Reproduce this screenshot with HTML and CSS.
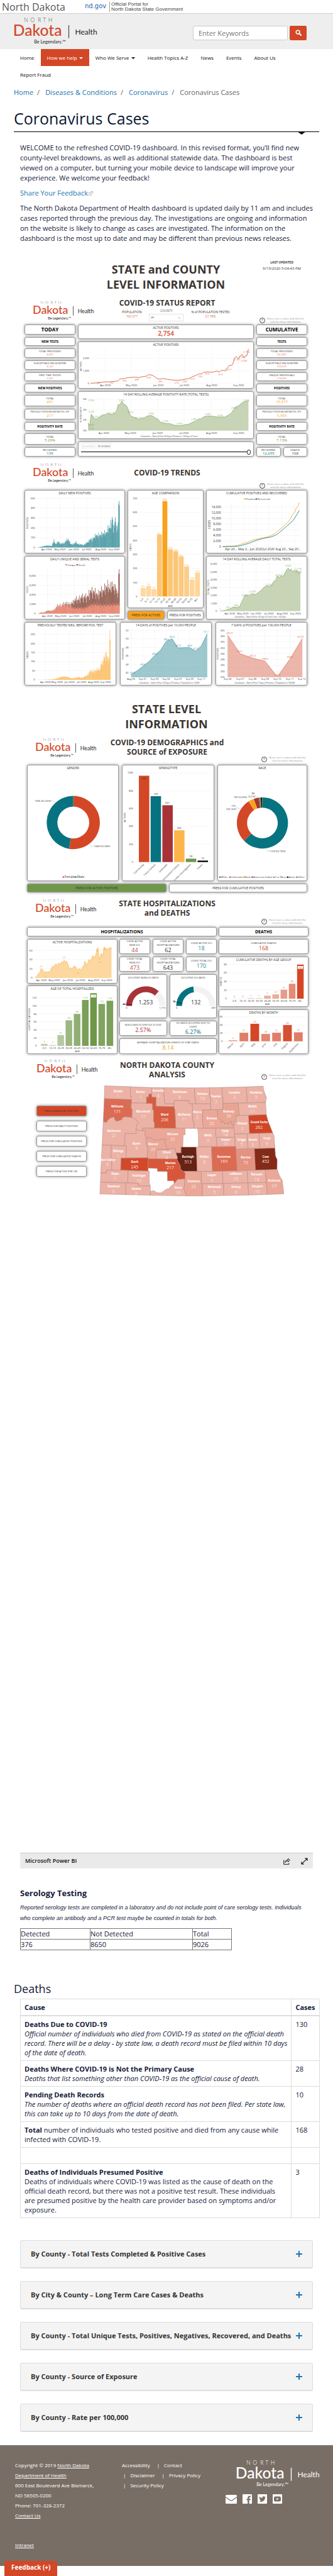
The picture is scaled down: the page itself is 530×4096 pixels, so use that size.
FILE: index.html
```
<!DOCTYPE html>
<html lang="en">
<head>
<meta charset="utf-8">
<title>Coronavirus Cases | Department of Health</title>
<link rel="stylesheet" href="styles.css">
</head>
<body>
<div class="portal">
  <span class="portal-name">North Dakota</span>
  <span class="portal-gov">nd.gov</span>
  <span class="portal-tag">Official Portal for<br>North Dakota State Government</span>
</div>

<header class="site-head">
  <a class="brand" href="#" aria-label="North Dakota Health"><svg class="logo logo-lg"></svg></a>
  <form class="search">
    <input type="text" aria-label="Search" placeholder="Enter Keywords">
    <button type="button" aria-label="Search"><svg viewBox="0 0 16 16"><circle cx="6.5" cy="6.5" r="4.6" fill="none" stroke="#fff" stroke-width="2.6"/><path d="M10 10l4.4 4.4" stroke="#fff" stroke-width="3" stroke-linecap="round"/></svg></button>
  </form>
</header>

<nav class="menu">
  <a href="#">Home</a>
  <a href="#" class="on">How we help <i class="caret"></i></a>
  <a href="#">Who We Serve <i class="caret"></i></a>
  <a href="#">Health Topics A-Z</a>
  <a href="#">News</a>
  <a href="#">Events</a>
  <a href="#">About Us</a>
  <a href="#">Report Fraud</a>
</nav>

<main>
  <div class="crumbs"><a href="#">Home</a><span>/</span><a href="#">Diseases &amp; Conditions</a><span>/</span><a href="#">Coronavirus</a><span>/</span>Coronavirus Cases</div>
  <h1>Coronavirus Cases</h1>

  <div class="body">
    <p>WELCOME to the refreshed COVID-19 dashboard. In this revised format, you’ll find new<br>county-level breakdowns, as well as additional statewide data. The dashboard is best<br>viewed on a computer, but turning your mobile device to landscape will improve your<br>experience. We welcome your feedback!</p>
    <p><a href="#">Share Your Feedback<svg class="ext" viewBox="0 0 10 10"><path d="M5 .5h4.500v4.500l-1.500-1.500-3 3-1.500-1.500 3-3zM4 3.500H.5v6H6V7" fill="none" stroke="#999" stroke-width="1"/></svg></a></p>
    <p>The North Dakota Department of Health dashboard is updated daily by 11 am and includes<br>cases reported through the previous day. The investigations are ongoing and information<br>on the website is likely to change as cases are investigated. The information on the<br>dashboard is the most up to date and may be different than previous news releases.</p>

    <section class="report">
      <div class="title-row">
        <h2>STATE and COUNTY<br>LEVEL INFORMATION</h2>
        <div class="updated"><b>LAST UPDATED</b><span>9/13/2020 5:04:43 PM</span></div>
      </div>

      <div class="head head-status">
        <svg class="logo logo-sm"></svg>
        <div class="head-mid">
          <h2 class="sub">COVID-19 STATUS REPORT</h2>
          <div class="facts">
            <div class="fact"><span>POPULATION</span><em>760,077</em></div>
            <div class="pick"><label for="county">COUNTY</label><select id="county"><option>All</option></select></div>
            <div class="fact"><span>% of POPULATION TESTED</span><em>27.78%</em></div>
          </div>
        </div>
        <div class="note"><b class="help">?</b><span>Hover over a value and click the<br>icon for more information</span></div>
      </div>

      <div class="status">
        <div class="side">
          <div class="card big">TODAY</div>
          <div class="card mid">NEW TESTS</div>
          <div class="card red"><span>TOTAL PROCESSED</span><em class="s">8,505</em></div>
          <div class="card red"><span>SUSCEPTIBLE ENCOUNTERS</span><em class="s">8,147</em></div>
          <div class="card red"><span>FIRST TIME TESTED</span><em class="s">2,292</em></div>
          <div class="card mid">NEW POSITIVES</div>
          <div class="card gold"><span>TOTAL</span><em>431</em></div>
          <div class="card gold"><span class="xs">PREVIOUSLY TESTED NEG BEFORE POS. TEST</span><em>217</em></div>
          <div class="card mid">POSITIVITY RATE</div>
          <div class="card green"><span>TOTAL</span><em>5.29%</em></div>
          <div class="card teal"><span>RECOVERED</span><em>135</em></div>
        </div>
        <div class="center">
          <div class="card active"><span>ACTIVE POSITIVES</span><strong>2,754</strong></div>
          <div class="card plot"><h3>ACTIVE POSITIVES</h3><svg id="c-active"></svg></div>
          <div class="card plot"><h3>14 DAY ROLLING AVERAGE POSITIVITY RATE (TOTAL TESTS)</h3><svg id="c-rate"></svg></div>
          <div class="card range">
            <div class="dates"><input class="off" type="text" value="3/15/2020" aria-label="From"><input type="text" value="9/12/2020" aria-label="To"></div>
            <input class="slider" type="range" min="0" max="100" value="100" aria-label="Date range">
          </div>
        </div>
        <div class="side">
          <div class="card big">CUMULATIVE</div>
          <div class="card mid">TESTS</div>
          <div class="card red"><span>TOTAL PROCESSED</span><em class="s">541,850</em></div>
          <div class="card red"><span>SUSCEPTIBLE ENCOUNTERS</span><em class="s">523,570</em></div>
          <div class="card red"><span>UNIQUE INDIVIDUALS</span><em class="s">218,606</em></div>
          <div class="card mid">POSITIVES</div>
          <div class="card gold"><span>TOTAL</span><em>15,577</em></div>
          <div class="card gold"><span class="xs">PREVIOUSLY TESTED NEG BEFORE POS. TEST</span><em>5,383</em></div>
          <div class="card mid">POSITIVITY RATE</div>
          <div class="card green"><span>TOTAL</span><em>7.13%</em></div>
          <div class="pair">
            <div class="card teal"><span>RECOVERED</span><em>12,655</em></div>
            <div class="card"><span>DEATHS</span><em>168</em></div>
          </div>
        </div>
      </div>

      <div class="head head-trends">
        <svg class="logo logo-sm"></svg>
        <div class="head-mid"><h2 class="sub">COVID-19 TRENDS</h2></div>
        <div class="note"><b class="help">?</b><span>Hover over a value and click the<br>icon for more information</span></div>
      </div>

      <div class="trends">
        <div class="col">
          <div class="card plot"><h3>DAILY NEW POSITIVES</h3><svg id="c-new"></svg></div>
          <div class="card plot"><h3>DAILY UNIQUE AND SERIAL TESTS</h3><svg id="c-tests"></svg></div>
        </div>
        <div class="col">
          <div class="card plot"><h3>AGE COMPARISON</h3><svg id="c-age"></svg></div>
          <div class="toggle">
            <button class="card press press-gold" type="button">PRESS FOR ACTIVES</button>
            <button class="card press" type="button">PRESS FOR POSITIVES</button>
          </div>
        </div>
        <div class="col">
          <div class="card plot"><h3>CUMULATIVE POSITIVES AND RECOVERED</h3><svg id="c-cumul"></svg></div>
          <div class="card plot"><h3>14 DAY ROLLING AVERAGE DAILY TOTAL TESTS</h3><svg id="c-roll"></svg></div>
        </div>
      </div>
      <div class="thirds">
        <div class="card plot"><h3>PREVIOUSLY TESTED NEG. BEFORE POS. TEST</h3><svg id="c-prev"></svg></div>
        <div class="card plot"><h3>14 DAYS of POSITIVES per 10,000 PEOPLE</h3><svg id="c-14"></svg></div>
        <div class="card plot"><h3>7 DAYS of POSITIVES per 100,000 PEOPLE</h3><svg id="c-7"></svg></div>
      </div>

      <h2 class="state">STATE LEVEL<br>INFORMATION</h2>

      <div class="head head-demo">
        <svg class="logo logo-sm"></svg>
        <div class="head-mid"><h2 class="sub">COVID-19 DEMOGRAPHICS and<br>SOURCE of EXPOSURE</h2></div>
        <div class="note"><b class="help">?</b><span>Hover over a value and click the<br>icon for more information</span></div>
      </div>
      <div class="demo">
        <div class="card plot"><h3>GENDER</h3><svg id="c-gender"></svg></div>
        <div class="card plot"><h3>SPREADTYPE</h3><svg id="c-spread"></svg></div>
        <div class="card plot"><h3>RACE</h3><svg id="c-race"></svg></div>
      </div>
      <div class="demo-toggle">
        <button class="card press press-green" type="button">PRESS FOR ACTIVE POSITIVES</button>
        <button class="card press" type="button">PRESS FOR CUMULATIVE POSITIVES</button>
      </div>

      <div class="head head-hosp">
        <svg class="logo logo-sm"></svg>
        <div class="head-mid"><h2 class="sub">STATE HOSPITALIZATIONS<br>and DEATHS</h2></div>
        <div class="note"><b class="help">?</b><span>Hover over a value and click the<br>icon for more information</span></div>
      </div>
      <div class="hosp">
        <div class="card band wide">HOSPITALIZATIONS</div>
        <div class="card band">DEATHS</div>
        <div class="col3">
          <div class="card plot"><h3>ACTIVE HOSPITALIZATIONS</h3><svg id="c-hosp"></svg></div>
          <div class="card plot"><h3>AGE OF TOTAL HOSPITALIZED</h3><svg id="c-hage"></svg></div>
        </div>
        <div class="col">
          <div class="trio">
            <div class="card kpi rose"><span>COVID ACTIVE<br>NON-ICU</span><em>44</em></div>
            <div class="card kpi"><span>COVID ACTIVE<br>HOSPITALIZATIONS</span><em>62</em></div>
            <div class="card kpi aqua"><span>COVID ACTIVE ICU</span><em>18</em></div>
            <div class="card kpi rose"><span>COVID TOTAL<br>NON-ICU</span><em>473</em></div>
            <div class="card kpi"><span>COVID TOTAL<br>HOSPITALIZATIONS</span><em>643</em></div>
            <div class="card kpi aqua"><span>COVID TOTAL ICU</span><em>170</em></div>
          </div>
          <div class="duo">
            <div class="card plot"><h3 class="s">OCCUPIED NON-ICU BEDS</h3><svg id="c-beds"></svg></div>
            <div class="card plot"><h3 class="s">OCCUPIED ICU BEDS</h3><svg id="c-icu"></svg></div>
            <div class="card kpi wine"><span class="xs">NON-ICU BEDS OCCUPIED DUE TO COVID</span><em>2.57%</em></div>
            <div class="card kpi teal"><span>ICU BEDS OCCUPIED DUE TO<br>COVID</span><em>6.27%</em></div>
          </div>
          <div class="card kpi gold last"><span>AVERAGE HOSPITALIZATION LENGTH OF STAY (DAYS)</span><em>8.14</em></div>
        </div>
        <div class="col">
          <div class="card kpi orange"><span>CUMULATIVE DEATHS</span><em>168</em></div>
          <div class="card plot"><h3>CUMULATIVE DEATHS BY AGE GROUP</h3><svg id="c-dage"></svg></div>
          <div class="card plot"><h3>DEATHS BY MONTH</h3><svg id="c-month"></svg></div>
        </div>
      </div>

      <div class="head head-map">
        <svg class="logo logo-sm"></svg>
        <div class="head-mid"><h2 class="sub">NORTH DAKOTA COUNTY<br>ANALYSIS</h2></div>
        <div class="note"><b class="help">?</b><span>Hover over a value and click the<br>icon for more information</span></div>
      </div>
      <div class="county">
        <div class="presses">
          <button class="card press press-red" type="button">PRESS FOR ACTIVE POSITIVES</button>
          <button class="card press" type="button">PRESS FOR DAILY POSITIVES</button>
          <button class="card press" type="button">PRESS FOR CUMULATIVE POSITIVES</button>
          <button class="card press" type="button">PRESS FOR CUMULATIVE DEATHS</button>
          <button class="card press" type="button">PRESS FOR ACTIVE PER 10K</button>
        </div>
        <svg id="map" viewBox="0 0 1350 840"></svg>
      </div>
    </section>

    <div class="powerbar">
      <span>Microsoft Power BI</span>
      <button type="button" aria-label="Share"><svg viewBox="0 0 16 16"><path d="M1 5v10h12v-3M4 11c0-4 3-6.500 7-6.500V1.500l4 4-4 4V7C8 7 6 8 4 11z" fill="none" stroke="#000" stroke-width="1.300"/></svg></button>
      <button type="button" aria-label="Full screen"><svg viewBox="0 0 16 16"><path d="M1.500 14.500l13-13M9 1.500h5.500V7M1.500 9v5.500H7" fill="none" stroke="#000" stroke-width="1.500"/></svg></button>
    </div>

    <h3 class="sero-title">Serology Testing</h3>
    <p class="sero-note">Reported serology tests are completed in a laboratory and do not include point of care serology tests. Individuals who complete an antibody and a PCR test maybe be counted in totals for both.</p>
    <table class="sero">
      <colgroup><col class="c1"><col class="c2"><col></colgroup>
      <tr><td>Detected</td><td>Not Detected</td><td>Total</td></tr>
      <tr><td>376</td><td>8650</td><td>9026</td></tr>
    </table>
  </div>

  <h2 class="deaths-title">Deaths</h2>
  <div class="body">
    <table class="deaths">
      <thead><tr><th>Cause</th><th class="n">Cases</th></tr></thead>
      <tbody>
      <tr><td><b>Deaths Due to COVID-19</b><br><i>Official number of individuals who died from COVID-19 as stated on the official death<br>record. There will be a delay - by state law, a death record must be filed within 10 days<br>of the date of death.</i></td><td>130</td></tr>
      <tr><td><b>Deaths Where COVID-19 is Not the Primary Cause</b><br><i>Deaths that list something other than COVID-19 as the official cause of death.</i></td><td>28</td></tr>
      <tr><td><b>Pending Death Records</b><br><i>The number of deaths where an official death record has not been filed. Per state law,<br>this can take up to 10 days from the date of death.</i></td><td>10</td></tr>
      <tr><td><b>Total</b> number of individuals who tested positive and died from any cause while<br>infected with COVID-19.</td><td>168</td></tr>
      <tr><td>&nbsp;</td><td></td></tr>
      <tr><td><b>Deaths of Individuals Presumed Positive</b><br>Deaths of individuals where COVID-19 was listed as the cause of death on the<br>official death record, but there was not a positive test result. These individuals<br>are presumed positive by the health care provider based on symptoms and/or<br>exposure.</td><td>3</td></tr>
      </tbody>
    </table>

    <div class="panels">
      <button type="button"><span>By County - Total Tests Completed &amp; Positive Cases</span><i class="plus"></i></button>
      <button type="button"><span>By City &amp; County – Long Term Care Cases &amp; Deaths</span><i class="plus"></i></button>
      <button type="button"><span>By County - Total Unique Tests, Positives, Negatives, Recovered, and Deaths</span><i class="plus"></i></button>
      <button type="button"><span>By County - Source of Exposure</span><i class="plus"></i></button>
      <button type="button"><span>By County - Rate per 100,000</span><i class="plus"></i></button>
    </div>
  </div>
</main>

<footer>
  <div class="addr">
    <div>Copyright © 2019 <a href="#">North Dakota</a></div>
    <div><a href="#">Department of Health</a></div>
    <div>600 East Boulevard Ave Bismarck,</div>
    <div>ND 58505-0200</div>
    <div>Phone: 701-328-2372</div>
    <div><a href="#">Contact Us</a></div>
    <div class="intranet"><a href="#">Intranet</a></div>
  </div>
  <div class="links">
    <div><a href="#">Accessibility</a><span>|</span><a href="#">Contact</a></div>
    <div><span>|</span><a href="#">Disclaimer</a><span>|</span><a href="#">Privacy Policy</a></div>
    <div><span>|</span><a href="#">Security Policy</a></div>
  </div>
  <div class="social">
    <svg class="logo logo-lg logo-white"></svg>
    <div class="icons">
      <a href="#" aria-label="Email"><svg class="mail" viewBox="0 0 18 15"><rect y="1" width="18" height="14" rx="1.500" fill="#fff"/><path d="M0 4.500l7.500 5.200q1.500 1 3 0L18 4.500" fill="none" stroke="#796e65" stroke-width="1.200"/></svg></a>
      <a href="#" aria-label="Facebook"><svg viewBox="0 0 15 15"><rect width="15" height="15" rx="1" fill="#fff"/><path d="M8.200 15V9.500H6.500V7.200h1.700V5.600c0-2 1.200-3.100 3-3.100h1.700v2.200h-1.100c-.9 0-1.200.5-1.200 1.200v1.300h2.200l-.3 2.300h-1.900V15z" fill="#796e65"/></svg></a>
      <a href="#" aria-label="Twitter"><svg viewBox="0 0 15 15"><rect width="15" height="15" rx="1" fill="#fff"/><path d="M12.800 4.300c-.4.2-.8.300-1.200.35.450-.27.770-.7.930-1.200-.4.250-.87.430-1.350.520a2.130 2.130 0 0 0-3.650 1.950A6.070 6.070 0 0 1 3.100 3.700a2.130 2.130 0 0 0 .66 2.860c-.35 0-.68-.1-.97-.27 0 1.050.73 1.930 1.710 2.140-.3.080-.64.090-.96.030.27.850 1.050 1.460 2 1.480A4.300 4.300 0 0 1 2.400 10.900 6.060 6.060 0 0 0 11.730 5.500c.42-.3.790-.7 1.070-1.200z" fill="#796e65"/></svg></a>
      <a href="#" aria-label="YouTube"><svg viewBox="0 0 15 15"><rect width="15" height="15" rx="1" fill="#fff"/><rect x="2" y="3.500" width="11" height="8" rx="2.200" fill="#796e65"/><path d="M6.300 5.700v3.600l3-1.800z" fill="#fff"/></svg></a>
    </div>
  </div>
</footer>
<button class="feedback" type="button">Feedback (+)</button>
<script src="charts.js"></script>
</body>
</html>
```
FILE: styles.css
```
* { box-sizing: border-box; }
body { margin: 0; padding-bottom: 18px; background: #fff; color: #15203a; font: 11px/16px "Open Sans", "Noto Sans", sans-serif; }
a { color: #1b76b0; text-decoration: none; }
button, input, select { font-family: inherit; margin: 0; }
h1, h2, h3, p { margin: 0; font-weight: 400; }

.portal { display: flex; align-items: center; padding: 1px 0 0 3px; border-bottom: 1px solid #ccc; background: #fff; }
.portal-name { width: 132px; font-size: 16px; line-height: 20px; color: #58595b; }
.portal-gov { width: 39px; font: 10px/14px "DejaVu Sans", sans-serif; color: #2a62a8; padding-bottom: 3px; }
.portal-tag { padding-left: 2px; border-left: 1px solid #999; font: 8px/8px "Liberation Sans", sans-serif; color: #444; }

.site-head { display: flex; align-items: center; justify-content: space-between; padding: 6px 42px 6px 22px; background: #eee; }
.brand { display: flex; }
.logo { --main: #d34727; --ink: #222; --soft: #555; display: block; overflow: visible; font-family: Lato, "Open Sans", sans-serif; }
.logo-lg { width: 131px; height: 44px; }
.logo-sm { width: 95px; height: 32px; }
.logo-white { --main: #fff; --ink: #fff; --soft: #fff; }
.lg-thin { fill: var(--soft); font-weight: 300; }
.lg-main { fill: var(--main); font-weight: 500; }
.lg-text { fill: var(--ink); }
.lg-bar { fill: var(--soft); }
.search { display: flex; gap: 3px; padding-top: 4px; }
.search input { width: 151px; height: 23px; padding: 0 8px; border: 1px solid #ccc; border-radius: 3px; background: #fff; font-size: 11px; color: #555; }
.search input::placeholder { color: #777; opacity: 1; }
.search button { width: 27px; height: 23px; padding: 0; border: 0; border-radius: 2px; background: #d34727; display: flex; align-items: center; justify-content: center; }
.search svg { width: 10px; height: 10px; }

.menu { display: flex; flex-wrap: wrap; padding: 0 60px 0 22px; font-size: 8px; line-height: 27px; }
.menu a { padding: 0 10px; color: #111; }
.menu a.on { background: #d34727; color: #fff; }
.caret { display: inline-block; border: 3px solid transparent; border-top-color: currentColor; border-bottom: 0; margin-left: 1px; vertical-align: 1px; }

main { padding: 7px 22px 0; }
.crumbs { color: #666; }
.crumbs span { margin: 0 9px 0 6px; }
h1 { position: relative; margin-top: 18px; padding-bottom: 6px; border-bottom: 1px solid #000; font-size: 25px; line-height: 30px; color: #0c1a33; }
h1::after { content: ""; position: absolute; right: 21px; top: 100%; border: 7px solid transparent; border-top: 5px solid #000; border-bottom: 0; }
.body { padding: 0 10px; }
.body > p { margin-bottom: 8px; white-space: nowrap; }
h1 + .body { padding-top: 17px; }
.ext { width: 7px; height: 7px; margin-left: 1px; }

/* dashboard */
.report { padding: 17px 9px 1036px 7px; color: #333; }
.title-row { display: grid; grid-template-columns: 81px 1fr 81px; }
.title-row h2 { grid-column: 2; padding-top: 4px; }
.title-row h2, .state { text-align: center; font-size: 18px; line-height: 24px; font-weight: 700; color: #3b3531; }
.updated { text-align: center; font-size: 6px; line-height: 10px; }
.updated b { display: block; font-size: 5px; }
.head { display: grid; grid-template-columns: 110px 1fr 110px; }
.head .logo-sm { margin: 10px 0 0 18px; }
.head-mid { text-align: center; padding: 10px 0 0 4px; }
.sub { font-size: 12px; line-height: 15px; font-weight: 700; color: #3b3531; white-space: nowrap; }
.note { display: flex; gap: 3px; align-self: end; justify-content: flex-end; align-items: center; padding: 0 2px 4px 0; text-align: center; font-size: 4px; line-height: 5px; color: #888; }
.help { width: 9px; border: 1px solid #444; border-radius: 50%; font-size: 6px; line-height: 7px; font-weight: 400; color: #333; }
.head-status { min-height: 52px; }
.head-status .logo-sm, .head-trends .logo-sm { margin-left: 14px; }
.head-status .logo-sm { margin-top: 14px; }
.head-status .note, .head-trends .note { padding-right: 5px; padding-bottom: 2px; }
.head-trends { min-height: 53px; }
.head-trends .head-mid { padding-top: 18px; }
.head-demo { min-height: 53px; }
.head-hosp { min-height: 55px; }
.head-map { min-height: 45px; }
.head-map .logo-sm { margin: 8px 0 0 20px; }
.facts { display: flex; justify-content: center; gap: 12px; padding-left: 28px; font-size: 5px; line-height: 7px; white-space: nowrap; }
.fact { padding-top: 4px; }
.fact span, .fact em { display: block; }
.fact em { font-style: normal; color: #df6a52; }
.pick { width: 55px; color: #666; }
.pick label { display: block; line-height: 10px; }
.pick select { -webkit-appearance: none; appearance: none; display: block; width: 100%; height: 12px; padding: 0 2px; border: 1px solid #e4e4e4; border-radius: 0; background: linear-gradient(45deg, transparent 50%, #aaa 50%, #aaa 62%, transparent 62%) right 4px center / 3px 3px no-repeat, linear-gradient(-45deg, transparent 50%, #aaa 50%, #aaa 62%, transparent 62%) right 2px center / 3px 3px no-repeat, #fff; font-size: 4px; line-height: 8px; color: #555; }

.card { display: flex; flex-direction: column; align-items: center; justify-content: center; min-width: 0; overflow: hidden; border: 1px solid #999; border-radius: 3px; background: #fff; box-shadow: 0 0 4px rgba(0,0,0,.45); text-align: center; font-size: 4px; line-height: 5px; color: #333; white-space: nowrap; }
.card em { font-style: normal; font-size: 6px; line-height: 7px; }
.card em.s { font-size: 4px; line-height: 6px; }
.card .xs { font-size: 3px; }
.red em { color: #df6a52; }
.gold em { color: #f9a21c; }
.green em { color: #6f9749; }
.teal em { color: #077380; }
.big { font-size: 8px; line-height: 10px; font-weight: 700; color: #000; }
.mid { font-size: 5px; line-height: 7px; font-weight: 700; color: #000; }
.plot { justify-content: flex-start; align-items: stretch; }
.plot h3 { font-size: 5px; line-height: 9px; }
.plot h3.s { font-size: 4px; }
.plot svg { display: block; width: 100%; height: auto; }

.status { display: grid; grid-template-columns: 81fr 280fr 81fr; gap: 4px; }
.side { display: grid; grid-template-rows: 16fr 14fr 15fr 15fr 14fr 14fr 18fr 17fr 14fr 18fr 15fr; gap: 4px; }
.center { display: flex; flex-direction: column; gap: 4px; min-width: 0; }
.pair { display: grid; grid-template-columns: 1fr 1fr; gap: 4px; }
.active { min-height: 23px; font-size: 5px; }
.active strong { font-size: 10px; line-height: 13px; color: #df6a52; }
.active span { padding-top: 1px; }
.range { min-height: 24px; padding: 0 4px; align-items: stretch; }
.dates { display: flex; gap: 2px; }
.dates input { width: 23px; height: 8px; padding: 0 1px; border: 1px solid #eee; font-size: 4px; color: #333; background: #fff; }
.dates .off { color: #bbb; }
.slider { -webkit-appearance: none; appearance: none; width: 100%; height: 9px; margin-top: 1px; background: linear-gradient(#000, #000) center / 100% 1px no-repeat; }
.slider::-webkit-slider-thumb { -webkit-appearance: none; width: 6px; height: 8px; border: 1px solid #333; border-radius: 50%; background: #fff; }

.trends { display: grid; grid-template-columns: 160fr 121fr 161fr; gap: 4px; }
.col, .col3 { display: flex; flex-direction: column; gap: 4px; min-width: 0; }
.col3 { gap: 3px; }
.toggle { display: grid; grid-template-columns: 1fr 1fr; gap: 4px; }
.press { min-height: 14px; padding: 0; font-size: 5px; line-height: 7px; }
.press-gold { background: #f9a21c; }
.press-green { background: #6f9749; }
.press-red { background: #d34727; }
.thirds { display: grid; grid-template-columns: 1fr 1fr 1fr; gap: 6px; margin-top: 4px; }
.state { margin-top: 25px; padding-left: 2px; }
.demo, .demo-toggle { margin-left: 4px; display: grid; }
.demo { grid-template-columns: 146fr 147fr 143fr; gap: 5px; }
.demo-toggle { grid-template-columns: 222fr 220fr; gap: 4px; margin-top: 4px; }

.hosp { margin: 0 -2px 0 4px; display: grid; grid-template-columns: 144fr 155fr 143fr; column-gap: 3px; row-gap: 4px; }
.band { min-height: 15px; font-size: 7px; line-height: 9px; font-weight: 700; color: #000; }
.wide { grid-column: span 2; }
.trio { display: grid; grid-template-columns: 1fr 1fr 1fr; gap: 4px; }
.duo { display: grid; grid-template-columns: 1fr 1fr; gap: 4px; }
.kpi { min-height: 24px; line-height: 6px; }
.kpi em { font-size: 9px; line-height: 10px; }
.last { min-height: 25px; }
.rose em { color: #bd4f55; }
.aqua em { color: #2f8b98; }
.wine em { color: #a73338; }
.orange em { color: #d34727; }

.county { display: flex; gap: 14px; padding: 0 33px 0 19px; }
.presses { display: flex; flex-direction: column; gap: 7px; padding-top: 37px; width: 80px; }
.presses .press { min-height: 17px; font-size: 4px; }
#map { flex: 1; min-width: 0; display: block; }

.powerbar { display: flex; align-items: center; gap: 17px; padding: 4px 8px; border-top: 1px solid #c8c8c8; background: #eaeaea; color: #111; font-size: 9px; font-weight: 600; }
.powerbar span { flex: 1; }
.powerbar button { display: flex; padding: 0; border: 0; background: none; }
.powerbar svg { width: 11px; height: 11px; }

.sero-title { margin-top: 30px; font-size: 13px; line-height: 18px; font-weight: 700; }
.body > .sero-note { margin: 6px 0 7px; white-space: normal; font: italic 9px/17px "Liberation Sans", Arial, sans-serif; }
.sero { width: 337px; table-layout: fixed; border-collapse: collapse; border: 1px solid #222; line-height: 16px; }
.sero td { padding: 0; border: 1px solid #777; }
.sero .c1 { width: 111px; }
.sero .c2 { width: 163px; }

.deaths-title { margin: 49px 0 4px; font-size: 18px; line-height: 24px; }
.deaths { width: 100%; border-collapse: collapse; border: 1px solid #ddd; line-height: 15px; }
.deaths th, .deaths td { padding: 5px 6px; border: 1px solid #ddd; text-align: left; vertical-align: top; white-space: nowrap; }
.deaths th { border-bottom-width: 2px; font-weight: 700; }
.deaths .n { width: 42px; }

.panels { display: flex; flex-direction: column; gap: 20px; margin: 35px 0 21px; }
.panels button { display: flex; align-items: center; justify-content: space-between; padding: 14px 16px; border: 1px solid #ddd; border-bottom-width: 2px; border-radius: 3px; background: #f4f4f4; font-size: 11px; line-height: 14px; font-weight: 700; color: #333; text-align: left; white-space: nowrap; }
.plus { width: 10px; height: 10px; background: linear-gradient(#1b76b0, #1b76b0) center / 10px 2px no-repeat, linear-gradient(#1b76b0, #1b76b0) center / 2px 10px no-repeat; }

footer { display: grid; grid-template-columns: 170fr 165fr 148fr; padding: 24px 23px 25px 24px; background: #796e65; color: #fff; font-size: 8px; line-height: 16px; }
footer a { color: #fff; }
.addr a { text-decoration: underline; }
.intranet { margin-top: 31px; }
.links span { margin: 0 7px 0 11px; }
.links span:first-child { margin-left: 2px; }
.social .logo-white { margin-left: auto; }
.icons { display: flex; gap: 9px; margin-top: 10px; }
.icons a { display: flex; }
.icons svg { width: 15px; height: 15px; }
.icons .mail { width: 18px; }
.feedback { position: fixed; left: 7px; bottom: 0; height: 24px; padding: 0 11px 4px; border: 0; border-radius: 4px 4px 0 0; background: #d34727; color: #fff; font-size: 10px; line-height: 14px; font-weight: 700; }
```
FILE: charts.js
```
(function () {
  var NS = 'http://www.w3.org/2000/svg';
  var INK = '#333', GRID = '#d4d4d4';
  var RED = '#d34727', TEAL = '#077380', GREEN = '#6f9749', GOLD = '#f9a21c', WINE = '#a73338';

  function el(parent, tag, attrs, text) {
    var n = document.createElementNS(NS, tag);
    for (var k in attrs) n.setAttribute(k, attrs[k]);
    if (text != null) n.textContent = text;
    parent.appendChild(n);
    return n;
  }

  // Department logo, shared by the page header, the report headings and the footer.
  Array.prototype.forEach.call(document.querySelectorAll('.logo'), function (svg) {
    svg.setAttribute('viewBox', '0 0 194 66');
    el(svg, 'text', { 'class': 'lg-thin', x: '23 38 56 68 81', y: 10, 'font-size': 13 }, 'NORTH');
    el(svg, 'text', { 'class': 'lg-main', x: -3, y: 43, 'font-size': 37 }, 'Dakota');
    el(svg, 'rect', { 'class': 'lg-bar', x: 129, y: 18, width: 2, height: 31 });
    el(svg, 'text', { 'class': 'lg-text', x: 145, y: 41, 'font-size': 18 }, 'Health');
    el(svg, 'text', { 'class': 'lg-text', x: 47, y: 62, 'font-size': 11 }, 'Be Legendary.™');
  });

  // A chart maps drawing units to the svg's own pixels: ox, oy is the origin, sy the vertical scale.
  function Chart(id, ox, oy, w, h, sy) {
    this.svg = document.getElementById(id);
    this.svg.setAttribute('viewBox', '0 0 ' + w + ' ' + h);
    this.X = function (x) { return +((x - ox) * 0.338).toFixed(2); };
    this.Y = function (y) { return +((y - oy) * sy).toFixed(2); };
  }
  Chart.prototype.text = function (x, y, s, o) {
    o = o || {};
    var size = o.size || 4, px = this.X(x), py = this.Y(y);
    var a = { x: px, y: py, dy: '.35em', 'font-size': size, fill: o.fill || INK, 'text-anchor': o.anchor || 'middle' };
    if (o.rot) a.transform = 'rotate(' + o.rot + ' ' + px + ' ' + py + ')';
    if (o.bold) a['font-weight'] = 700;
    el(this.svg, 'text', a, s);
  };
  Chart.prototype.texts = function (list, o) {
    for (var i = 0; i < list.length; i++) this.text(list[i][0], list[i][1], list[i][2], o);
  };
  Chart.prototype.line = function (x1, y1, x2, y2, o) {
    o = o || {};
    el(this.svg, 'line', { x1: this.X(x1), y1: this.Y(y1), x2: this.X(x2), y2: this.Y(y2), stroke: o.stroke || GRID, 'stroke-width': o.w || 0.5, 'stroke-dasharray': o.solid ? 'none' : '.7 1' });
  };
  Chart.prototype.rows = function (x1, x2, list, size) {
    for (var i = 0; i < list.length; i++) {
      this.line(x1, list[i][0], x2, list[i][0]);
      this.text(x1 - 7, list[i][0], list[i][1], { anchor: 'end', size: size });
    }
  };
  Chart.prototype.cols = function (xs, y1, y2, labels, ly, size) {
    for (var i = 0; i < xs.length; i++) {
      this.line(xs[i], y1, xs[i], y2);
      this.text(xs[i], ly, labels[i], { size: size });
    }
  };
  Chart.prototype.path = function (pts, stroke, base, fill) {
    var self = this, d = pts.map(function (p) { return self.X(p[0]) + ',' + self.Y(p[1]); });
    if (base) el(this.svg, 'polygon', { points: this.X(pts[0][0]) + ',' + this.Y(base) + ' ' + d.join(' ') + ' ' + this.X(pts[pts.length - 1][0]) + ',' + this.Y(base), fill: fill });
    el(this.svg, 'polyline', { points: d.join(' '), fill: 'none', stroke: stroke, 'stroke-width': 0.8, 'stroke-linejoin': 'round' });
  };
  Chart.prototype.bar = function (x, w, top, base, fill, op) {
    el(this.svg, 'rect', { x: this.X(x), y: this.Y(top), width: +(w * 0.338).toFixed(2), height: +(this.Y(base) - this.Y(top)).toFixed(2), fill: fill, 'fill-opacity': op || 1 });
  };
  Chart.prototype.dot = function (x, y, fill) {
    el(this.svg, 'circle', { cx: this.X(x), cy: this.Y(y), r: 1.2, fill: fill });
  };
  Chart.prototype.ring = function (x, y, R, r, parts, from, sweep) {
    var cx = this.X(x), cy = this.Y(y), a = from;
    for (var i = 0; i < parts.length; i++) {
      var b = a + parts[i][0] * sweep, big = b - a > Math.PI ? 1 : 0;
      var p = function (rad, t) { return (cx + rad * Math.sin(t)).toFixed(2) + ' ' + (cy - rad * Math.cos(t)).toFixed(2); };
      el(this.svg, 'path', { d: 'M' + p(R, a) + 'A' + R + ' ' + R + ' 0 ' + big + ' 1 ' + p(R, b) + 'L' + p(r, b) + 'A' + r + ' ' + r + ' 0 ' + big + ' 0 ' + p(r, a) + 'Z', fill: parts[i][1] });
      a = b;
    }
  };

  function at(profile, x) {
    for (var i = 1; i < profile.length; i++) {
      if (x <= profile[i][0]) {
        var p = profile[i - 1], q = profile[i];
        return p[1] + (q[1] - p[1]) * (x - p[0]) / (q[0] - p[0]);
      }
    }
    return profile[profile.length - 1][1];
  }
  function ripple(i) { return 0.5 + 0.5 * Math.abs(Math.sin(i * 0.9) * 0.7 + Math.sin(i * 2.7 + 1) * 0.3); }

  Chart.prototype.daily = function (profile, base, unit, fill, floor) {
    var x0 = profile[0][0], x1 = profile[profile.length - 1][0], n = 182, step = (x1 - x0) / n;
    for (var i = 0; i <= n; i++) {
      var x = x0 + i * step, k = i > n - 3 ? 1 : ripple(i);
      var v = at(profile, x) * k;
      if (floor) {
        var u = Math.min(v, at(floor, x) * ripple(i + 3));
        this.bar(x, step, base - v * unit, base - u * unit, fill, i % 3 ? 1 : 0.8);
        this.bar(x, step, base - u * unit, base, '#e2674c', i % 3 ? 1 : 0.8);
      } else this.bar(x, step, base - v * unit, base, fill, i % 3 ? 0.95 : 0.7);
    }
  };

  var MONTHS = ['Apr 2020', 'May 2020', 'Jun 2020', 'Jul 2020', 'Aug 2020', 'Sep 2020'];
  var c, i;

  c = new Chart('c-active', 370, 769, 278, 64, 0.2282);
  c.rows(427, 1175, [[843, '2,000'], [930, '1,000'], [1016, '0']]);
  c.cols([496, 619, 746, 869, 997, 1124], 780, 1016, MONTHS, 1030);
  c.text(380, 897, 'ACTIVES', { rot: -90 });
  c.path([[427,1016],[465,1013],[490,1007],[525,1005],[555,1000],[565,986],[590,983],[598,977],[620,975],[640,974],[655,976],[668,971],[690,966],[697,958],[710,957],[722,964],[735,978],[745,986],[755,988],[765,983],[790,989],[810,993],[835,996],[855,993],[870,988],[890,984],[903,973],[925,960],[940,949],[948,952],[960,940],[985,937],[990,940],[1005,938],[1020,931],[1035,937],[1042,926],[1055,928],[1062,930],[1068,915],[1080,892],[1092,892],[1098,875],[1106,838],[1112,830],[1122,846],[1130,828],[1140,815],[1150,840],[1158,822],[1163,823],[1170,778]], RED);
  c.texts([[464,1011,'39'],[525,1011,'132'],[587,1000,'376'],[644,991,'489'],[701,976,'670'],[755,1006,'320'],[832,1011,'210'],[870,1006,'299'],[906,988,'519'],[944,968,'766'],[976,953,'919'],[1038,956,'913'],[1075,919,'1,317'],[1113,850,'2,143'],[1141,831,'2,321'],[1149,858,'2,040'],[1161,797,'2,754']], { fill: '#df6a52' });

  c = new Chart('c-rate', 370, 1115, 278, 65, 0.2282);
  c.path([[415,1290],[422,1318],[430,1230],[440,1255],[447,1264],[457,1264],[470,1248],[485,1236],[498,1235],[507,1222],[516,1230],[528,1233],[540,1226],[550,1205],[556,1166],[565,1163],[574,1141],[583,1163],[590,1164],[598,1178],[606,1205],[614,1240],[625,1250],[635,1254],[643,1257],[653,1270],[663,1260],[680,1256],[692,1245],[710,1240],[722,1247],[735,1262],[742,1262],[754,1285],[780,1296],[800,1297],[820,1308],[845,1311],[860,1309],[875,1303],[885,1303],[900,1293],[915,1282],[922,1280],[935,1264],[945,1265],[960,1250],[975,1244],[1000,1245],[1025,1251],[1060,1251],[1075,1238],[1088,1226],[1100,1200],[1112,1178],[1122,1175],[1135,1158],[1145,1147],[1155,1142],[1170,1140]], '#8caf6d', 1346, '#c7d4b5');
  c.rows(415, 1175, [[1128, '6%'], [1200, '4%'], [1273, '2%'], [1346, '0%']]);
  c.cols([489, 614, 742, 867, 996, 1124], 1128, 1346, MONTHS, 1361);
  c.text(380, 1236, '% POSITIVITY', { rot: -90 });
  c.text(796, 1385, 'Calculation = (Sum of Past 14 Days of Positives / 14 Days of Tests)', { size: 3 });
  c.texts([[430,1136,'5.9%'],[430,1216,'3.2%'],[449,1251,'2.2%'],[430,1306,'0.8%'],[430,1331,'0.0%'],[527,1222,'3.1%'],[573,1136,'5.6%'],[614,1219,'3.1%'],[650,1256,'2.1%'],[712,1227,'2.9%'],[780,1281,'1.4%'],[846,1299,'0.9%'],[913,1266,'1.8%'],[979,1230,'2.8%'],[1037,1240,'2.5%'],[1102,1186,'4.0%'],[1162,1136,'5.6%']], { fill: '#86ab66' });

  c = new Chart('c-new', 119, 250, 158, 90, 0.2411);
  c.rows(172, 562, [[264, '500'], [328, '400'], [393, '300'], [459, '200'], [524, '100'], [588, '0']]);
  c.cols([220, 283, 348, 409, 475, 538], 264, 588, MONTHS, 602);
  c.text(129, 427, 'POSITIVES', { rot: -90 });
  c.daily([[175,0],[190,8],[220,25],[245,22],[253,100],[262,40],[272,80],[285,50],[305,60],[310,95],[322,105],[335,40],[350,50],[357,75],[365,45],[385,40],[392,30],[410,65],[425,110],[435,105],[450,160],[470,165],[490,190],[500,190],[512,280],[518,260],[525,340],[530,390],[535,190],[540,380],[545,350],[550,200],[555,340],[559,490],[562,430]], 588, 0.648, '#1d7f8c');

  c = new Chart('c-tests', 119, 688, 158, 90, 0.2411);
  c.rows(176, 562, [[778, '8,000'], [841, '6,000'], [902, '4,000'], [964, '2,000'], [1027, '0']]);
  c.cols([224, 286, 350, 412, 475, 538], 730, 1027, MONTHS, 1041);
  c.text(129, 869, 'TESTS', { rot: -90 });
  c.dot(312, 705, '#e2674c'); c.text(318, 705, 'Unique', { anchor: 'start' });
  c.dot(364, 705, '#7c3020'); c.text(370, 705, 'Serial', { anchor: 'start' });
  c.daily([[178,0],[195,350],[205,300],[225,800],[240,800],[255,1000],[270,2200],[290,2300],[300,2700],[315,2800],[330,2600],[345,3200],[358,4100],[365,3800],[383,4600],[395,4600],[412,4700],[425,6200],[445,6000],[460,5200],[472,6200],[485,6300],[498,7300],[512,7900],[518,6600],[528,8200],[538,6600],[545,7600],[552,5000],[556,6400],[559,9800],[562,8500]], 1027, 0.0311, '#7c3828',
    [[178,0],[255,1000],[270,2100],[300,2500],[325,2300],[350,1500],[400,1500],[430,2400],[450,2500],[480,2300],[520,2400],[562,2600]]);

  c = new Chart('c-age', 606, 250, 119, 177, 0.2411);
  c.rows(655, 952, [[264, '700'], [356, '600'], [449, '500'], [541, '400'], [634, '300'], [726, '200'], [819, '100'], [911, '0']]);
  c.text(616, 587, 'CASES', { rot: -90 });
  c.text(805, 974, 'AGE');
  var ages = ['0-5', '6-11', '12-14', '15-19', '20-29', '30-39', '40-49', '50-59', '60-69', '70-79', '80+'];
  var av = [60, 74, 52, 441, 680, 336, 323, 284, 214, 120, 170];
  var ac = ['#fdd8a0', '#fdd8a0', '#fdd8a0', '#fcc677', '#f9a21c', '#fcc677', '#fcc677', '#fcc97e', '#fcce8b', '#fdd69b', '#fdd69b'];
  for (i = 0; i < 11; i++) {
    var bx = 665 + i * 25.6, by = 911 - av[i] * 0.9243;
    c.bar(bx, 23, by, 911, ac[i]);
    c.text(bx + 11, by - 8, av[i], { fill: '#fbb040' });
    c.text(bx + 12, 924, ages[i], { rot: -45, anchor: 'end' });
  }

  c = new Chart('c-cumul', 975, 250, 159, 90, 0.2411);
  c.rows(1050, 1415, [[321, '14,000'], [358, '12,000'], [397, '10,000'], [434, '8,000'], [471, '6,000'], [509, '4,000'], [546, '2,000'], [584, '0']], 5);
  c.cols([1090, 1149, 1208, 1267, 1328, 1389], 291, 584, ['Apr 20…', 'May 2…', 'Jun 2020', 'Jul 2020', 'Aug 20…', 'Sep 20…'], 601, 5);
  c.text(987, 437, 'CASES', { rot: -90, size: 5 });
  c.dot(1154, 268, GOLD); c.text(1160, 268, 'Positives', { anchor: 'start' });
  c.dot(1209, 268, TEAL); c.text(1215, 268, 'Recovered', { anchor: 'start' });
  c.path([[1050,583],[1090,580],[1118,576],[1135,567],[1155,558],[1170,553],[1190,540],[1210,533],[1240,524],[1265,517],[1280,508],[1298,493],[1315,473],[1330,457],[1345,437],[1360,418],[1370,397],[1380,370],[1389,355],[1397,328],[1405,315],[1411,291]], GOLD);
  c.path([[1050,583],[1125,579],[1150,570],[1175,560],[1193,550],[1208,541],[1240,529],[1280,518],[1300,506],[1315,492],[1335,468],[1355,443],[1375,419],[1389,395],[1400,370],[1411,345]], TEAL);

  c = new Chart('c-roll', 975, 688, 159, 90, 0.2411);
  c.path([[1038,1010],[1060,1006],[1084,995],[1100,984],[1118,986],[1130,980],[1138,955],[1150,920],[1158,905],[1170,908],[1190,895],[1205,901],[1220,885],[1232,873],[1245,852],[1260,842],[1268,847],[1280,843],[1290,815],[1300,808],[1307,778],[1317,788],[1325,778],[1335,780],[1345,755],[1353,735],[1360,727],[1366,745],[1372,732],[1380,752],[1388,738],[1393,745],[1402,742],[1411,765],[1416,745]], '#8caf6d', 1010, '#c7d4b5');
  c.rows(1030, 1420, [[700, '6,000'], [752, '5,000'], [804, '4,000'], [855, '3,000'], [907, '2,000'], [958, '1,000'], [1010, '0']]);
  c.cols([1084, 1145, 1207, 1268, 1331, 1393], 700, 1010, MONTHS, 1025);
  c.text(984, 855, 'TOTAL TESTS', { rot: -90 });
  c.text(1227, 1047, 'Calculation = (Sum of Past 14 Days of Total Tests / 14 Days)', { size: 3 });
  c.texts([[1038,996,'1'],[1076,983,'251'],[1114,972,'495'],[1153,905,'1,804'],[1189,882,'2,228'],[1268,835,'3,154'],[1314,775,'4,293'],[1359,712,'5,507'],[1407,731,'5,176'],[1407,754,'4,710']], { fill: '#86ab66' });

  c = new Chart('c-prev', 119, 1121, 144, 90, 0.2411);
  c.rows(172, 519, [[1161, '250'], [1221, '200'], [1281, '150'], [1341, '100'], [1401, '50'], [1461, '0']]);
  c.cols([215, 270, 328, 385, 441, 498], 1133, 1461, MONTHS, 1475);
  c.text(129, 1297, 'CASES', { rot: -90 });
  c.daily([[175,0],[215,1],[250,4],[265,9],[290,22],[305,24],[320,20],[330,12],[345,12],[370,20],[385,14],[400,25],[413,34],[425,65],[440,60],[455,70],[462,75],[470,70],[475,125],[482,110],[490,170],[495,150],[500,190],[505,170],[510,140],[514,170],[517,275],[519,220]], 1461, 1.2, '#fbae3c');

  c = new Chart('c-14', 568, 1121, 144, 90, 0.2411);
  c.path([[617,1426],[645,1402],[672,1373],[700,1342],[728,1301],[755,1267],[783,1207],[810,1190],[838,1250],[893,1248],[920,1272],[948,1237],[976,1157]], '#4c9aa4', 1444, '#9cc7cc');
  c.rows(612, 985, [[1134, '52'], [1190, '50'], [1247, '48'], [1303, '46'], [1359, '44'], [1415, '42']]);
  c.cols([617, 672, 728, 783, 838, 893, 948], 1134, 1444, ['Aug 30', 'Sep 01', 'Sep 03', 'Sep 05', 'Sep 07', 'Sep 09', 'Sep 11'], 1456);
  c.text(578, 1289, 'POSITIVES', { rot: -90 });
  c.text(797, 1481, 'Calculation = (Sum of Past 14 Days of Positives / Population) x 10,000', { size: 3 });
  c.texts([[625,1412,'41.6'],[672,1361,'43.5'],[728,1288,'46.0'],[783,1193,'49.4'],[810,1176,'50.0'],[838,1235,'47.9'],[893,1235,'48.0'],[921,1258,'47.1'],[971,1146,'51.1']], { fill: '#2f8b98' });

  c = new Chart('c-7', 1019, 1121, 144, 90, 0.2411);
  c.path([[1073,1165],[1132,1289],[1190,1317],[1249,1338],[1307,1441],[1366,1325],[1425,1188]], '#dd7a66', 1443, '#edb5a9');
  c.rows(1066, 1430, [[1134, '265'], [1173, '260'], [1211, '255'], [1250, '250'], [1289, '245'], [1327, '240'], [1366, '235'], [1404, '230'], [1443, '225']]);
  c.cols([1073, 1132, 1190, 1249, 1307, 1366, 1422], 1134, 1443, ['Sep 06', 'Sep 07', 'Sep 08', 'Sep 09', 'Sep 10', 'Sep 11', 'Sep 12'], 1456);
  c.text(1028, 1289, 'POSITIVES', { rot: -90 });
  c.text(1248, 1481, 'Calculation = (Sum of Past 7 Days of Positives / Population) x 100,000', { size: 3 });
  c.texts([[1082,1153,'260.9'],[1132,1274,'245.1'],[1190,1302,'241.4'],[1249,1324,'238.5'],[1307,1430,'225.3'],[1366,1310,'240.4'],[1416,1176,'257.9']], { fill: '#df6a52' });

  c = new Chart('c-gender', 129, 590, 144, 174, 0.225);
  c.ring(344, 954, 42.3, 25.3, [[0.5258, RED], [0.4742, TEAL]], 0, Math.PI * 2);
  c.line(238, 800, 248, 800, { solid: 1, stroke: '#aaa' }); c.line(248, 800, 257, 812, { solid: 1, stroke: '#aaa' });
  c.line(421, 1106, 428, 1122, { solid: 1, stroke: '#aaa' }); c.line(428, 1122, 438, 1122, { solid: 1, stroke: '#aaa' });
  c.text(200, 801, '1306 (47.42%)', { size: 4 });
  c.text(479, 1122, '1448 (52.58%)', { size: 4 });
  c.dot(297, 1339, RED); c.text(303, 1339, 'Female', { anchor: 'start', size: 5 });
  c.dot(356, 1339, TEAL); c.text(362, 1339, 'Male', { anchor: 'start', size: 5 });

  c = new Chart('c-spread', 578, 590, 145, 174, 0.225);
  c.rows(635, 1000, [[603, '1000'], [729, '800'], [855, '600'], [981, '400'], [1107, '200'], [1233, '0']]);
  c.text(588, 917, 'ACTIVES', { rot: -90 });
  var sp = [['Community', 968, RED], ['Close Contact', 739, TEAL], ['Unknown', 637, WINE], ['Household Contact', 356, '#fdb54a'], ['Under Investigation', 38, GREEN], ['Travel', 16, '#000']];
  for (i = 0; i < 6; i++) {
    var sx = 655 + i * 55.3, top = 1233 - sp[i][1] * 0.63;
    c.bar(sx, 49, top, 1233, sp[i][2]);
    c.text(sx + 24, i ? top - 17 : top + 18, sp[i][1]);
    c.text(sx + 22, 1248, sp[i][0], { rot: -45, anchor: 'end' });
  }

  c = new Chart('c-race', 1027, 590, 141, 174, 0.225);
  c.ring(1236, 957, 40.7, 24.4, [[0.6278, TEAL], [0.2814, RED], [0.0363, GOLD], [0.032, WINE], [0.0125, GREEN], [0.008, '#000'], [0.002, '#796e65']], 0, Math.PI * 2);
  c.texts([[1192, 747, '88'], [1186, 769, '(3.2%)'], [1132, 774, '100 (3.63%)'], [1100, 839, '775'], [1089, 861, '(28.14%)'], [1307, 1158, '1729 (62.78%)']]);
  c.line(1202, 758, 1211, 774, { solid: 1, stroke: '#aaa' });
  c.line(1113, 849, 1132, 859, { solid: 1, stroke: '#aaa' });
  c.line(1258, 1140, 1260, 1157, { solid: 1, stroke: '#aaa' }); c.line(1260, 1157, 1269, 1157, { solid: 1, stroke: '#aaa' });
  [[1036, TEAL, 'White'], [1083, RED, 'Unknown'], [1146, GOLD, 'Black'], [1188, WINE, 'American Indian'], [1290, GREEN, '2 or More'], [1355, '#000', 'Asian'], [1398, '#796e65', 'Other']].forEach(function (k) {
    c.dot(k[0], 1340, k[1]); c.text(k[0] + 5, 1340, k[2], { anchor: 'start' });
  });

  c = new Chart('c-hosp', 129, 378, 142, 60, 0.225);
  c.path([[164,607],[172,598],[180,577],[184,580],[192,543],[200,550],[210,575],[214,564],[220,570],[225,562],[232,570],[243,535],[250,522],[254,528],[262,508],[270,520],[275,502],[280,517],[290,492],[294,506],[301,482],[308,500],[312,490],[320,515],[326,548],[332,535],[338,550],[344,530],[350,525],[358,535],[363,555],[372,542],[382,553],[390,525],[394,530],[398,490],[408,520],[418,478],[424,490],[432,465],[436,450],[443,468],[450,445],[455,405],[460,394],[467,478],[475,435],[482,455],[490,388],[496,404],[504,400],[508,413],[516,393],[524,410]], '#fbbc5c', 609, '#fdd79f');
  c.rows(158, 530, [[414, '60'], [478, '40'], [543, '20'], [609, '0']]);
  c.texts([[194,624,MONTHS[0]],[254,624,MONTHS[1]],[318,624,MONTHS[2]],[378,624,MONTHS[3]],[440,624,MONTHS[4]],[502,624,MONTHS[5]]]);
  c.texts([[192,527,'20'],[210,597,'10'],[301,464,'39'],[366,575,'16'],[458,415,'64'],[468,497,'40'],[491,407,'68'],[520,400,'62']], { fill: '#fbb040' });

  function shaded(c, list, x0, w, pitch, base, unit, color, ink, cap, ly, rot) {
    var max = Math.max.apply(null, list.map(function (p) { return p[1]; }));
    list.forEach(function (p, i) {
      var x = x0 + i * pitch, v = Math.min(p[1], cap || p[1]), top = base - v * unit;
      if (p[1]) c.bar(x, w, top, base, color, Math.min(1, 0.4 + 0.6 * p[1] / max));
      if (cap && p[1] === max) {
        c.bar(x + 3, w - 6, top + 10, top + 30, '#fff');
        c.text(x + w / 2, top + 20, p[1], { fill: ink });
      } else c.text(x + w / 2, top - 16, p[1], { fill: ink });
      c.text(x + w / 2, ly, p[0], rot ? { rot: -45, anchor: 'end' } : {});
    });
  }
  c = new Chart('c-hage', 129, 707, 142, 98, 0.225);
  c.rows(178, 543, [[750, '120'], [807, '100'], [863, '80'], [919, '60'], [976, '40'], [1032, '20'], [1089, '0']]);
  shaded(c, [['0-9', 5], ['10-19', 2], ['20-29', 27], ['30-39', 64], ['40-49', 80], ['50-59', 115], ['60-69', 132], ['70-79', 105], ['80+', 113]], 192, 31, 38.6, 1089, 2.82, GREEN, '#86ab66', 132, 1104);
  c.text(138, 903, 'HOSPITALIZATIONS', { rot: -90 });
  c.text(364, 1127, 'AGE');

  c = new Chart('c-dage', 1033, 502, 141, 69, 0.225);
  c.rows(1075, 1445, [[514, '80'], [573, '60'], [634, '40'], [694, '20'], [755, '0']]);
  shaded(c, [['0-9', 0], ['10-19', 0], ['20-29', 1], ['30-39', 1], ['40-49', 7], ['50-59', 10], ['60-69', 21], ['70-79', 35], ['80+', 93]], 1089, 31, 38.8, 755, 3.01, RED, '#df6a52', 80, 771);
  c.text(1041, 634, 'DEATHS', { rot: -90 });
  c.text(1260, 795, 'AGE');

  c = new Chart('c-month', 1033, 875, 141, 60, 0.225);
  c.rows(1056, 1445, [[883, '60'], [942, '40'], [999, '20'], [1056, '0']]);
  shaded(c, [['March', 3], ['April', 21], ['May', 43], ['June', 18], ['July', 21], ['August', 40], ['September', 22]], 1077, 41, 51.3, 1056, 2.88, RED, '#df6a52', 0, 1069, 1);

  function gauge(id, ox, cx, frac, color, mark, at, value, max) {
    var c = new Chart(id, ox, 629, 74, 59, 0.225);
    c.ring(cx, 810, 31.4, 22, [[frac, color], [1 - frac, '#f3f2f1']], -Math.PI / 2, Math.PI);
    var t = -Math.PI / 2 + Math.PI * at, x = c.X(cx), y = c.Y(810);
    el(c.svg, 'line', { x1: x + 31.4 * Math.sin(t), y1: y - 31.4 * Math.cos(t), x2: x + 22 * Math.sin(t), y2: y - 22 * Math.cos(t), stroke: '#111', 'stroke-width': 0.7 });
    c.text(cx - 96, 806 - at * 400, mark, { anchor: 'end', bold: 1 });
    c.text(cx, 785, value, { size: 9 });
    c.text(cx - 91, 825, '0');
    c.text(cx + 94, 825, max, { anchor: 'end' });
  }
  gauge('c-beds', 566, 688, 0.7315, WINE, '44', 0.026, '1,253', '1,713');
  gauge('c-icu', 800, 921, 0.46, TEAL, '18', 0.063, '132', '287');

  // County map: name, value, label x, label y, outline, fill
  var A = '#edb2a6', B = '#eba898';
  var counties = [
    ['Divide',1,160,62,'65,24 248,31 246,98 254,101 253,122 62,115',A],
    ['Burke',1,318,68,'248,31 398,37 398,83 377,82 377,103 361,103 360,148 253,145 254,101 246,98',A],
    ['Renville',8,444,60,'398,37 485,38 483,80 490,150 555,153 555,172 427,169 427,105 397,105',A],
    ['Bottineau',6,596,68,'485,38 700,39 700,107 707,109 705,152 663,152 662,129 556,129 555,151 490,150 483,80',A],
    ['Rolette',10,756,80,'700,39 806,38 808,107 815,107 813,152 705,152 707,109 700,107',A],
    ['Towner',2,852,99,'806,38 895,36 897,105 901,107 901,193 815,193 815,107 808,107',A],
    ['Cavalier',2,983,71,'895,36 1066,32 1073,144 901,149 901,107 897,105',A],
    ['Pembina',5,1135,71,'1066,32 1185,27 1187,50 1208,108 1202,142 1073,144',A],
    ['Williams',171,154,170,'62,115 254,122 252,187 260,188 258,249 210,243 190,250 187,263 148,276 135,262 133,245 110,250 92,262 75,286 55,274','#dc6b53'],
    ['Mountrail',17,337,208,'253,145 403,150 403,192 411,195 410,278 417,280 417,323 332,323 330,343 300,338 287,325 290,300 304,285 285,262 258,249 260,188 252,187',A],
    ['Ward',206,489,230,'361,103 377,103 377,82 396,83 397,105 427,105 427,169 555,172 562,195 568,325 417,323 417,280 410,278 411,195 403,192 403,150 360,148','#d85c40'],
    ['McHenry',11,627,227,'556,129 662,129 663,152 684,152 690,280 697,282 697,325 568,325 562,195 555,172',A],
    ['Pierce',2,720,210,'684,152 813,152 813,193 757,195 757,282 763,325 697,325 697,282 690,280',A],
    ['Benson',25,822,257,'757,195 863,193 863,247 886,265 888,282 905,275 912,293 935,285 938,296 957,272 966,300 979,305 978,323 763,325 757,282',B],
    ['Ramsey',39,942,204,'901,149 1009,148 1016,234 994,235 994,277 979,280 979,305 966,305 957,272 938,296 935,285 912,293 905,275 888,282 886,265 863,247 863,193 901,193','#e9a594'],
    ['Walsh',11,1110,170,'1009,148 1202,142 1207,228 1016,234',A],
    ['Grand Forks',262,1156,281,'1081,233 1207,228 1220,275 1253,357 1088,361','#d04526'],
    ['Nelson',2,1039,290,'994,235 1081,233 1088,363 980,364 979,280 994,277',A],
    ['McKenzie',21,131,342,'55,274 75,286 92,262 110,250 133,245 135,262 148,276 187,263 190,250 210,243 258,249 285,262 304,285 290,300 287,325 287,362 210,361 206,447 47,442',A],
    ['McLean',32,545,365,'332,323 632,325 634,370 619,371 617,456 605,457 605,498 569,498 560,467 505,472 502,460 488,420 498,400 490,398 425,412 390,393 358,390 350,378 350,340 330,343',B],
    ['Dunn',9,289,431,'210,361 287,362 287,325 300,338 330,343 350,340 350,378 358,390 361,405 360,450 367,452 366,533 216,533 217,449 206,447',A],
    ['Mercer',29,408,437,'358,390 390,393 425,412 490,398 498,400 488,420 502,460 518,475 431,475 430,540 372,539 366,533 367,452 360,450',B],
    ['Oliver',3,504,495,'431,475 518,475 530,467 560,467 569,498 581,535 575,541 430,540',A],
    ['Wells',3,795,377,'722,325 850,325 850,388 856,390 856,453 727,455 728,375',A],
    ['Eddy',14,918,345,'850,325 979,323 984,388 856,388 850,380',A],
    ['Foster',15,921,408,'856,388 984,388 987,451 856,453',A],
    ['Griggs',5,1033,404,'984,364 1072,363 1078,468 993,472 987,451',A],
    ['Steele',5,1113,407,'1072,363 1157,361 1161,467 1078,468',A],
    ['Traill',9,1211,398,'1157,361 1253,357 1262,380 1268,464 1161,467',A],
    ['lden Valley',6,85,546,'47,442 111,446 108,530 116,535 114,620 80,619 80,640 37,639',A],
    ['Billings',1,160,485,'111,446 217,449 216,535 181,535 178,620 114,618 116,535 108,530',A],
    ['Stark',245,277,563,'181,535 372,533 372,626 178,620','#d34829'],
    ['Morton',217,529,569,'372,540 575,541 600,590 598,612 635,640 633,682 580,686 556,716 553,695 509,695 508,630 438,628 437,608 372,605','#d8573a'],
    ['Burleigh',513,654,527,'605,457 713,457 719,628 620,628 600,612 600,590 575,541 581,535 569,498 605,498','#662214'],
    ['Kidder',8,769,527,'713,457 820,455 827,628 719,628',A],
    ['Stutsman',169,907,524,'820,455 991,453 1001,625 827,628','#dd6b53'],
    ['Barnes',73,1062,530,'993,473 1123,469 1131,620 1001,625','#e59381'],
    ['Cass',452,1203,524,'1123,469 1268,464 1272,520 1284,545 1283,615 1131,620','#832b18'],
    ['Slope',1,139,644,'80,619 230,625 228,709 35,704 37,639 80,640',A],
    ['Hettinger',15,308,659,'230,625 380,627 380,710 387,733 302,730 302,714 228,709',A],
    ['Bowman',6,129,734,'35,704 215,712 214,793 31,788',A],
    ['Adams',8,288,752,'215,710 302,714 302,730 387,733 388,797 214,793',A],
    ['Sioux',10,584,743,'388,770 410,765 437,780 465,780 500,755 525,748 527,738 556,716 580,686 633,682 625,755 645,802 388,797',A],
    ['Emmons',22,694,701,'620,628 748,630 750,717 755,717 755,802 645,802 625,755 633,682 635,640',B],
    ['Logan',3,822,656,'748,630 898,628 901,713 750,716',A],
    ['LaMoure',15,991,647,'898,628 1072,624 1077,710 901,713',A],
    ['Ransom',14,1140,650,'1072,624 1200,620 1207,708 1077,710',A],
    ['McIntosh',5,840,740,'755,716 905,714 907,799 755,802',A],
    ['Dickey',6,994,740,'905,714 1078,710 1082,796 907,799',A],
    ['Sargent',10,1144,734,'1078,710 1207,708 1215,792 1082,796',A],
    ['Richland',29,1263,695,'1200,620 1285,616 1300,660 1320,692 1331,787 1215,792',B]
  ];
  var map = document.getElementById('map');
  counties.forEach(function (k) {
    el(map, 'polygon', { points: k[4], fill: k[5], stroke: '#a98880', 'stroke-width': 2.5, 'stroke-linejoin': 'round' });
  });
  counties.forEach(function (k) {
    el(map, 'text', { x: k[2], y: k[3] + 7, 'font-size': 20, 'font-weight': 700, fill: '#fff', 'text-anchor': 'middle' }, k[0]);
    el(map, 'text', { x: k[2], y: k[3] + 46 - (k[0] === 'Eddy' || k[0] === 'Foster' ? 8 : 0), 'font-size': 30, fill: '#fbe3dd', 'text-anchor': 'middle' }, k[1]);
  });
})();
```
